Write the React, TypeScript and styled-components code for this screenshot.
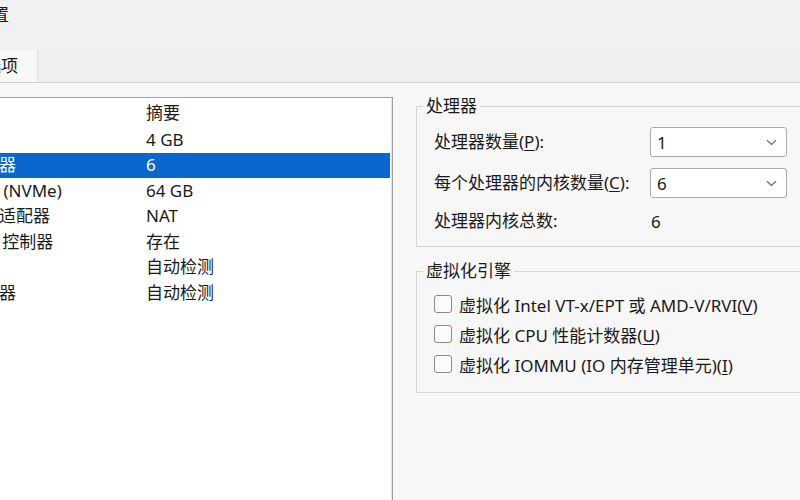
import React from 'react';
import styled, { createGlobalStyle } from 'styled-components';

const GlobalStyle = createGlobalStyle`
  html, body {
    margin: 0;
    padding: 0;
    background: #f7f7f7;
  }
  body {
    font-family: "Noto Sans", "Noto Sans CJK SC", sans-serif;
    color: #1a1a1a;
  }
`;

const HARDWARE = [
  { name: '内存', summary: '4 GB' },
  { name: '处理器', summary: '6', selected: true },
  { name: '硬盘 (NVMe)', summary: '64 GB' },
  { name: '网络适配器', summary: 'NAT' },
  { name: 'USB 控制器', summary: '存在' },
  { name: '声卡', summary: '自动检测' },
  { name: '显示器', summary: '自动检测' },
];

const ENGINE_OPTIONS = [
  { label: '虚拟化 Intel VT-x/EPT 或 AMD-V/RVI', key: 'V' },
  { label: '虚拟化 CPU 性能计数器', key: 'U' },
  { label: '虚拟化 IOMMU (IO 内存管理单元)', key: 'I' },
];

function Chevron() {
  return (
    <svg width="11" height="7" viewBox="0 0 11 7" fill="none">
      <path d="M1 1.2 L5.5 5.5 L10 1.2" stroke="#6a6a6a" strokeWidth="1.2" />
    </svg>
  );
}

export default function App() {
  return (
    <>
      <GlobalStyle />
      <Window>
        <TitleBar>
          <Title>虚拟机设置</Title>
        </TitleBar>
        <TabStrip>
          <Tab>选项</Tab>
        </TabStrip>
        <Body>
          <DeviceList>
            <HeaderRow>
              <Cell />
              <Cell>摘要</Cell>
            </HeaderRow>
            {HARDWARE.map((item) => (
              <DeviceRow key={item.name} $selected={!!item.selected}>
                <Cell>{item.name}</Cell>
                <Cell>{item.summary}</Cell>
              </DeviceRow>
            ))}
          </DeviceList>
          <SettingsPane>
            <Group>
              <Legend>处理器</Legend>
              <FormGrid>
                <Label>
                  处理器数量(<u>P</u>):
                </Label>
                <Combo>
                  <span>1</span>
                  <Chevron />
                </Combo>
                <Label>
                  每个处理器的内核数量(<u>C</u>):
                </Label>
                <Combo>
                  <span>6</span>
                  <Chevron />
                </Combo>
                <Label>处理器内核总数:</Label>
                <Value>6</Value>
              </FormGrid>
            </Group>
            <Group $gapTop>
              <Legend>虚拟化引擎</Legend>
              <CheckList>
                {ENGINE_OPTIONS.map((opt) => (
                  <CheckRow key={opt.key}>
                    <CheckBox />
                    <span>
                      {opt.label}(<u>{opt.key}</u>)
                    </span>
                  </CheckRow>
                ))}
              </CheckList>
            </Group>
          </SettingsPane>
        </Body>
      </Window>
    </>
  );
}

const Window = styled.div`
  width: 800px;
  height: 500px;
  overflow: hidden;
  display: flex;
  flex-direction: column;
  background: #f7f7f7;
  font-size: 17px;
`;

const TitleBar = styled.div`
  height: 50px;
  flex-shrink: 0;
  background: #f1f1f1;
  display: flex;
  align-items: flex-start;
  padding-top: 4px;
  box-sizing: border-box;
`;

const Title = styled.div`
  margin-left: -76px;
  line-height: 22px;
  white-space: nowrap;
`;

const TabStrip = styled.div`
  height: 33px;
  flex-shrink: 0;
  box-sizing: border-box;
  background: #efefef;
  border-bottom: 1px solid #cfcfcf;
  display: flex;
  align-items: stretch;
`;

const Tab = styled.div`
  margin-left: -28px;
  padding: 0 19px 0 12px;
  background: #f8f8f8;
  border-right: 1px solid #e2e2e2;
  display: flex;
  align-items: center;
  line-height: 20px;
`;

const Body = styled.div`
  flex: 1;
  display: flex;
  align-items: stretch;
  min-height: 0;
`;

const DeviceList = styled.div`
  margin: 14px 0 0 -35px;
  width: 428px;
  flex-shrink: 0;
  box-sizing: border-box;
  background: #fff;
  border-top: 1px solid #a3a3a3;
  border-right: 1px solid #9f9f9f;
  box-shadow: inset -1px 0 0 #e4e4e4;
  padding-top: 1px;
`;

const HeaderRow = styled.div`
  display: grid;
  grid-template-columns: 181px 1fr;
  height: 28px;
  align-items: center;
`;

const DeviceRow = styled.div<{ $selected: boolean }>`
  display: grid;
  grid-template-columns: 181px 1fr;
  height: 25.5px;
  align-items: center;
  margin-right: 2px;
  background: ${(p) => (p.$selected ? '#0a67cd' : 'transparent')};
  color: ${(p) => (p.$selected ? '#fff' : '#1a1a1a')};
`;

const Cell = styled.div`
  white-space: nowrap;
  line-height: 20px;
`;

const SettingsPane = styled.div`
  flex: 1;
  padding: 12px 0 0 23px;
  min-width: 0;
`;

const Group = styled.fieldset<{ $gapTop?: boolean }>`
  width: 420px;
  margin: ${(p) => (p.$gapTop ? '13px' : '0')} 0 0 0;
  padding: 0 0 0 17px;
  border: 1px solid #d6d6d6;
  box-sizing: border-box;
  min-width: 0;
`;

const Legend = styled.legend`
  margin-left: -11px;
  padding: 0 3px;
  line-height: 22px;
`;

const FormGrid = styled.div`
  display: grid;
  grid-template-columns: 216px 137px;
  grid-template-rows: 30px 30px 24px;
  row-gap: 11px;
  align-items: center;
  padding: 10px 0 13px;
`;

const Label = styled.div`
  white-space: nowrap;
  line-height: 20px;

  u {
    text-underline-offset: 2px;
  }
`;

const Combo = styled.div`
  height: 30px;
  box-sizing: border-box;
  border: 1px solid #ababab;
  border-radius: 3px;
  background: #fff;
  display: flex;
  align-items: center;
  justify-content: space-between;
  padding: 0 9px 0 6px;
`;

const Value = styled.div`
  padding-left: 1px;
`;

const CheckList = styled.div`
  display: flex;
  flex-direction: column;
  padding: 7px 0 13px;
`;

const CheckRow = styled.label`
  display: flex;
  align-items: center;
  gap: 7px;
  height: 30px;
  white-space: nowrap;

  u {
    text-underline-offset: 2px;
  }
`;

const CheckBox = styled.span`
  width: 18px;
  height: 18px;
  box-sizing: border-box;
  border: 1.5px solid #8a8a8a;
  border-radius: 3px;
  background: #fbfbfb;
  flex-shrink: 0;
`;
